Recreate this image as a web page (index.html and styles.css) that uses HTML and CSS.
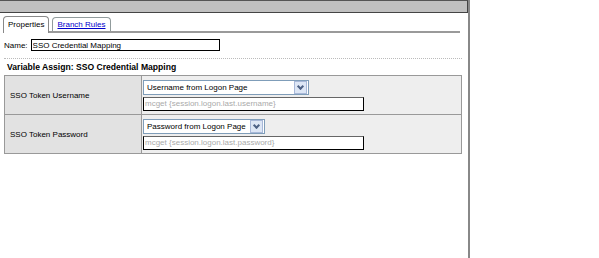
FILE: index.html
```
<!DOCTYPE html>
<html lang="en">
<head>
    <meta charset="UTF-8">
    <title>SSO Credential Mapping</title>
    <link rel="stylesheet" href="styles.css">
</head>
<body>
    <div class="panel">
        <div class="titlebar"></div>
        <div class="tabs">
            <div class="tab active">Properties</div>
            <div class="tab"><a href="#">Branch Rules</a></div>
        </div>
        <div class="name-row">
            <label>Name:</label>
            <input type="text" class="name-input" value="SSO Credential Mapping">
        </div>
        <div class="section">
            <div class="heading">Variable Assign: SSO Credential Mapping</div>
            <table class="assign">
                <tr>
                    <td class="key">SSO Token Username</td>
                    <td class="val">
                        <div class="select wide"><span>Username from Logon Page</span><span class="arrow"></span></div>
                        <div class="expr">mcget {session.logon.last.username}</div>
                    </td>
                </tr>
                <tr>
                    <td class="key">SSO Token Password</td>
                    <td class="val">
                        <div class="select"><span>Password from Logon Page</span><span class="arrow"></span></div>
                        <div class="expr">mcget {session.logon.last.password}</div>
                    </td>
                </tr>
            </table>
        </div>
    </div>
</body>
</html>
```

FILE: styles.css
```
body {
    margin: 0;
    font-family: "Liberation Sans", Arial, sans-serif;
    font-size: 8px;
    color: #000;
    background: #fff;
}
.panel {
    width: 468px;
    height: 258px;
    border-right: 2px solid #888;
}
.titlebar {
    height: 11px;
    background: #c0c0c0;
    border-top: 1px solid #555;
    border-bottom: 1px solid #444;
    border-right: 1px solid #444;
}
.tabs {
    display: flex;
    align-items: flex-end;
    gap: 3px;
    margin: 2px 8px 0 3px;
    border-bottom: 2px solid #9a9a9a;
    height: 16px;
}
.tab {
    border: 1px solid #919b9c;
    border-bottom: none;
    border-radius: 4px 4px 0 0;
    padding: 0 4px;
    height: 13px;
    line-height: 13px;
    background: #fff;
}
.tab.active {
    height: 15px;
    line-height: 15px;
    margin-bottom: -2px;
    border-color: #888;
    padding: 0 4px 1px;
}
.tab a {
    color: #0000cc;
}
.name-row {
    display: flex;
    align-items: center;
    gap: 3px;
    margin: 6px 0 0 4px;
}
.name-input {
    width: 185px;
    height: 10px;
    padding: 0 1px;
    border: 1px solid #000;
    font: inherit;
}
.section {
    margin: 7px 6px 0 4px;
    border-top: 1px dotted #bbb;
}
.heading {
    font-weight: bold;
    font-size: 8.6px;
    padding: 3px 0 0 3px;
    height: 13px;
}
.assign {
    width: 100%;
    border-collapse: collapse;
    border: 1px solid #999;
}
.assign td {
    border: 1px solid #999;
    height: 38px;
    padding: 0;
}
.key {
    width: 131px;
    background: #e2e2e2;
    padding-left: 5px !important;
}
.val {
    background: #eee;
    padding-left: 1px !important;
}
.select {
    display: inline-flex;
    align-items: center;
    justify-content: space-between;
    background: #fff;
    border: 1px solid #7f9db9;
    height: 13px;
    padding-left: 3px;
    gap: 4px;
}
.select.wide {
    width: 161px;
}
.arrow {
    width: 11px;
    height: 11px;
    margin-right: 1px;
    border: 1px solid #a8b8d8;
    background: #dde6f5;
    position: relative;
}
.arrow::after {
    content: "";
    position: absolute;
    left: 3px;
    top: 2px;
    width: 3px;
    height: 3px;
    border-right: 2px solid #4d6185;
    border-bottom: 2px solid #4d6185;
    transform: rotate(45deg);
}
.expr {
    margin-top: 2px;
    width: 218px;
    height: 12px;
    line-height: 12px;
    border: 1px solid #000;
    border-top-color: #666;
    background: #fff;
    color: #aaa;
    padding-left: 1px;
    overflow: hidden;
    white-space: nowrap;
}
```
